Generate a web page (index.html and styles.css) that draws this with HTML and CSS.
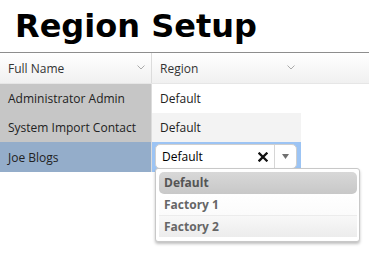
FILE: index.html
```html
<!DOCTYPE html>
<html>
<head>
    <title>Region Setup</title>
    <link rel="stylesheet" href="styles.css">
</head>
<body>
    <h1>Region Setup</h1>

    <div class="grid">
        <div class="grid-header">
            <div class="head-cell name-col">
                Full Name
                <svg class="sort" width="8" height="5" viewBox="0 0 8 5"><path d="M0.5 0.5 L4 4 L7.5 0.5" fill="none" stroke="#aaa" stroke-width="1"/></svg>
            </div>
            <div class="head-cell region-col">
                Region
                <svg class="sort" width="8" height="5" viewBox="0 0 8 5"><path d="M0.5 0.5 L4 4 L7.5 0.5" fill="none" stroke="#aaa" stroke-width="1"/></svg>
            </div>
        </div>

        <div class="grid-row">
            <div class="cell name-col">Administrator Admin</div>
            <div class="cell region-col">Default</div>
        </div>
        <div class="grid-row alt">
            <div class="cell name-col">System Import Contact</div>
            <div class="cell region-col">Default</div>
        </div>
        <div class="grid-row selected">
            <div class="cell name-col">Joe Blogs</div>
            <div class="cell region-col editing">
                <div class="combo">
                    <span class="combo-value">Default</span>
                    <svg class="combo-clear" width="10" height="10" viewBox="0 0 10 10"><path d="M1.5 1.5 L8.5 8.5 M8.5 1.5 L1.5 8.5" stroke="#111" stroke-width="2.3" stroke-linecap="square"/></svg>
                    <span class="combo-arrow">
                        <svg width="7" height="5" viewBox="0 0 7 5"><path d="M0 0 L7 0 L3.5 5 Z" fill="#707070"/></svg>
                    </span>
                </div>
                <ul class="combo-list">
                    <li class="active">Default</li>
                    <li>Factory 1</li>
                    <li class="last">Factory 2</li>
                </ul>
            </div>
        </div>
    </div>
</body>
</html>
```

FILE: styles.css
```css
body {
    font-family: "Open Sans", "DejaVu Sans", sans-serif;
    margin: 0;
    padding: 0;
    min-height: 100vh;
    background-color: #fff;
}

h1 {
    font-family: "DejaVu Sans", Verdana, sans-serif;
    font-size: 32px;
    font-weight: bold;
    line-height: 38px;
    margin: 0;
    padding: 7px 0 0 15px;
    height: 45px;
    color: #000;
}

.grid {
    font-size: 12px;
    color: #222;
}

.grid-header {
    display: flex;
    height: 30px;
    border-top: 1px solid #8e8e8e;
    border-bottom: 1px solid #e6e6e6;
    background: linear-gradient(#ffffff, #f0f0f0);
}

.head-cell {
    display: flex;
    align-items: center;
    justify-content: space-between;
    padding-left: 8px;
    padding-right: 6px;
    color: #333;
    box-sizing: border-box;
}

.head-cell.name-col {
    border-right: 1px solid #dcdcdc;
}

.sort {
    margin-top: -2px;
}

.name-col {
    width: 152px;
    flex-shrink: 0;
}

.region-col {
    width: 149px;
}

.grid-row {
    display: flex;
    height: 29px;
}

.cell {
    display: flex;
    align-items: center;
    padding-left: 8px;
    box-sizing: border-box;
}

.cell.name-col {
    background-color: #c6c6c6;
    border-right: 1px solid #dcdcdc;
}

.grid-row.alt .region-col {
    background-color: #f3f3f3;
}

.grid-row.selected {
    height: 30px;
}

.grid-row.selected .name-col {
    background-color: #94adca;
}

.cell.editing {
    background-color: #9cc4f4;
    padding: 2px 4px 3px 3px;
    position: relative;
    align-items: stretch;
}

.combo {
    flex: 1;
    display: flex;
    align-items: center;
    background-color: #fff;
    border: 1px solid #cfcfcf;
    border-radius: 5px;
}

.combo-value {
    flex: 1;
    padding-left: 6px;
    color: #000;
}

.combo-clear {
    margin-right: 6px;
}

.combo-arrow {
    width: 21px;
    align-self: stretch;
    display: flex;
    align-items: center;
    justify-content: center;
    border-left: 1px solid #d6d6d6;
}

.combo-list {
    position: absolute;
    top: 26px;
    left: 3px;
    width: 205px;
    margin: 0;
    padding: 3px 2px 4px 3px;
    list-style: none;
    background-color: #fff;
    border: 1px solid #c8c8c8;
    border-radius: 3px;
    box-shadow: 0 2px 3px rgba(0, 0, 0, 0.25);
    box-sizing: border-box;
    z-index: 5;
}

.combo-list li {
    height: 21px;
    line-height: 21px;
    padding-left: 5px;
    font-weight: bold;
    color: #666;
    border-bottom: 1px solid #ececec;
    background: linear-gradient(#ffffff, #fbfbfb);
}

.combo-list li.active {
    height: 22px;
    line-height: 22px;
    background: linear-gradient(#d8d8d8, #c8c8c8);
    color: #555;
    border-radius: 5px;
    border-bottom: none;
}

.combo-list li.last {
    border-bottom: none;
    background: linear-gradient(#f8f8f8, #ececec);
}
```
